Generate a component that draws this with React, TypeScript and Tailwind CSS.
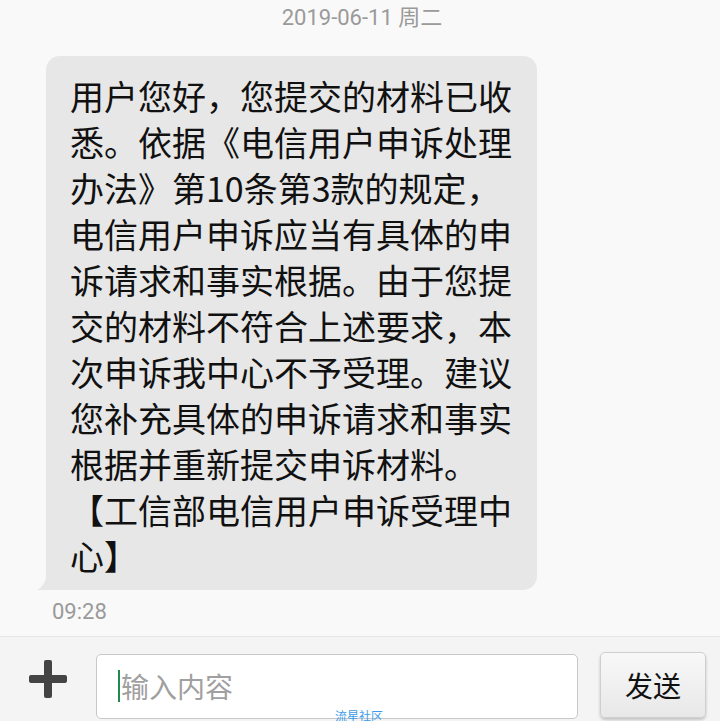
const lines = [
  "用户您好，您提交的材料已收",
  "悉。依据《电信用户申诉处理",
  "办法》第10条第3款的规定，",
  "电信用户申诉应当有具体的申",
  "诉请求和事实根据。由于您提",
  "交的材料不符合上述要求，本",
  "次申诉我中心不予受理。建议",
  "您补充具体的申诉请求和事实",
  "根据并重新提交申诉材料。",
  "【工信部电信用户申诉受理中",
  "心】",
];

const font = { fontFamily: '"Noto Sans CJK SC", Roboto, sans-serif' };

export default function App() {
  return (
    <div className="relative flex h-[721px] w-[720px] flex-col overflow-hidden bg-[#f9f9f9]" style={font}>
      <div className="flex-1">
        <div className="mt-[6px] pl-[4px] text-center text-[22px] leading-[24px] text-[#9a9a9a]" style={{ fontFamily: 'Roboto, "Noto Sans CJK SC", sans-serif' }}>
          2019-06-11 周二
        </div>
        <div className="relative ml-[46px] mt-[26px] w-[491px] rounded-[14px] bg-[#e7e7e7] pb-[11px] pl-[24px] pt-[17px]">
          {lines.map((l, i) => (
            <div key={i} className="whitespace-nowrap text-[34px] leading-[46px] text-[#111]">
              {l}
            </div>
          ))}
          <svg className="absolute bottom-0 left-[-9px]" width="20" height="16" viewBox="0 0 20 16">
            <path d="M20 0 L20 16 L0 16 Q8 12 10 0 Z" fill="#e7e7e7" />
          </svg>
        </div>
        <div className="ml-[52px] mt-[10px] text-[22px] leading-[24px] text-[#9a9a9a]" style={{ fontFamily: 'Roboto, sans-serif' }}>
          09:28
        </div>
      </div>
      <div className="flex h-[85px] items-center border-t border-[#e6e6e6] bg-[#f4f4f4]">
        <div className="ml-[28px] flex h-[40px] w-[40px] items-center justify-center">
          <svg width="40" height="40" viewBox="0 0 40 40">
            <rect x="16" y="1" width="8" height="38" rx="2" fill="#444" />
            <rect x="1" y="16" width="38" height="8" rx="2" fill="#444" />
          </svg>
        </div>
        <div className="ml-[28px] mt-[14px] flex h-[65px] w-[482px] items-center rounded-[5px] border border-[#c8c8c8] bg-white pl-[21px]">
          <div className="mr-[1px] h-[32px] w-[2px] bg-[#1e8a4e]" />
          <span className="text-[28px] text-[#a0a0a0]">输入内容</span>
        </div>
        <div className="ml-[22px] mt-[12px] flex h-[66px] w-[106px] items-center justify-center rounded-[5px] border border-[#cfcfcf] bg-gradient-to-b from-[#f8f8f8] to-[#e8e8e8] text-[28px] text-[#111] shadow-[0_2px_3px_rgba(0,0,0,0.2)]">
          发送
        </div>
      </div>
      <div className="absolute left-[335px] top-[709px] text-[12px] leading-[14px] text-[#3d9be9]">流星社区</div>
    </div>
  );
}
